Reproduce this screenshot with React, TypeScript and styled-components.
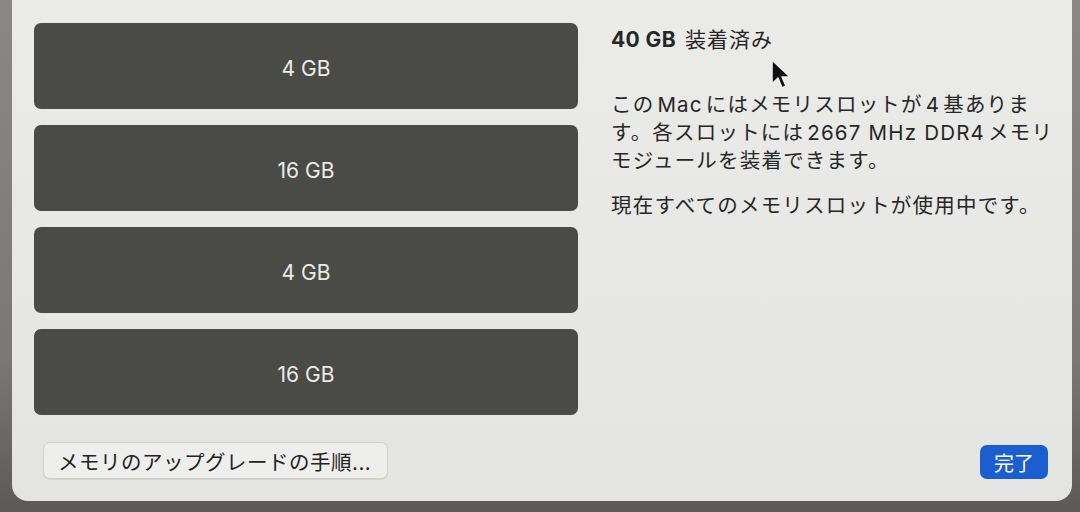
import type { FC } from "react";
import styled, { createGlobalStyle } from "styled-components";

const GlobalStyle = createGlobalStyle`
  html, body {
    margin: 0;
    padding: 0;
    background: #7c7a77;
    overflow: hidden;
  }
  body {
    font-family: Inter, "Noto Sans CJK JP", sans-serif;
    -webkit-font-smoothing: antialiased;
  }
`;

const slots = ["4 GB", "16 GB", "4 GB", "16 GB"];

const Desktop = styled.div`
  position: relative;
  width: 1080px;
  height: 512px;
  padding: 0 8px 11px 12px;
  box-sizing: border-box;
  background: linear-gradient(180deg, #8a8885 0%, #7a7875 70%, #5c5a58 100%);
`;

const Sheet = styled.div`
  height: 100%;
  box-sizing: border-box;
  padding: 23px 24px 22px 22px;
  background: linear-gradient(180deg, #ebebe9 0%, #e4e4e2 100%);
  border-radius: 0 0 16px 16px;
  display: grid;
  grid-template-columns: 544px minmax(0, 1fr);
  grid-template-rows: 1fr auto;
  column-gap: 33px;
`;

const SlotList = styled.div`
  display: flex;
  flex-direction: column;
  gap: 16px;
`;

const Slot = styled.div`
  height: 86px;
  border-radius: 7px;
  background: #4a4b47;
  color: #ececea;
  font-size: 21px;
  display: flex;
  align-items: center;
  justify-content: center;
  padding-top: 4px;
  box-sizing: border-box;
`;

const Info = styled.div`
  color: #262626;
  padding-top: 3px;
`;

const Heading = styled.h2`
  margin: 0;
  font-size: 21px;
  font-weight: 400;
  line-height: 28px;
  letter-spacing: 1px;

  b {
    font-weight: 700;
    letter-spacing: 0.4px;
    margin-right: 2px;
  }
`;

const Paragraph = styled.p<{ $gap: number }>`
  margin: ${({ $gap }) => $gap}px 0 0;
  font-size: 20.5px;
  line-height: 28px;
  letter-spacing: 1.2px;
  white-space: nowrap;
`;

// latin runs get a little air on both sides, as macOS sets mixed text
const Latin = styled.span`
  margin: 0 3px;
`;

const Footer = styled.div`
  grid-column: 1 / -1;
  display: flex;
  align-items: center;
  justify-content: space-between;
  padding-left: 9px;
`;

const PlainButton = styled.button`
  height: 37px;
  padding: 0 16px 0 14px;
  font-family: inherit;
  font-size: 20.5px;
  letter-spacing: 0.5px;
  color: #222;
  background: #eeeeec;
  border: 1px solid #cfcfcc;
  border-radius: 7px;
  box-shadow: 0 1px 1px rgba(0, 0, 0, 0.08);
`;

const PrimaryButton = styled.button`
  height: 34px;
  width: 68px;
  font-family: inherit;
  font-size: 20px;
  color: #fff;
  background: #1a5ecf;
  border: none;
  border-radius: 7px;
  margin-top: 3px;
`;

// pointer arrow resting above the description text
const Pointer = styled.svg`
  position: absolute;
  left: 770px;
  top: 58px;
`;

const Cursor: FC = () => (
  <Pointer width="24" height="34" viewBox="0 0 24 34">
    <path
      d="M2 2 L2 26 L8 20 L12 30 L16 28 L12 19 L20 19 Z"
      fill="#111"
      stroke="#f2f2f2"
      strokeWidth="1.5"
      strokeLinejoin="round"
    />
  </Pointer>
);

const App: FC = () => (
  <>
    <GlobalStyle />
    <Desktop>
      <Sheet>
        <SlotList>
          {slots.map((size, i) => (
            <Slot key={i}>{size}</Slot>
          ))}
        </SlotList>
        <Info>
          <Heading>
            <b>40 GB</b> 装着済み
          </Heading>
          <Paragraph $gap={37}>
            この<Latin>Mac</Latin>にはメモリスロットが<Latin>4</Latin>基ありま
            <br />
            す。各スロットには<Latin>2667 MHz DDR4</Latin>メモリ
            <br />
            モジュールを装着できます。
          </Paragraph>
          <Paragraph $gap={17}>現在すべてのメモリスロットが使用中です。</Paragraph>
        </Info>
        <Footer>
          <PlainButton>メモリのアップグレードの手順...</PlainButton>
          <PrimaryButton>完了</PrimaryButton>
        </Footer>
      </Sheet>
      <Cursor />
    </Desktop>
  </>
);

export default App;
